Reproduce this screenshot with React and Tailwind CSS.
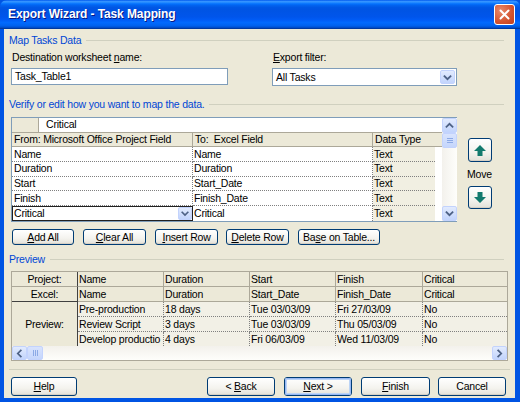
import React from "react";

const U = ({ children }) => <span className="underline underline-offset-[1px]">{children}</span>;

function Btn({ children, className = "", focus = false }) {
  return (
    <div
      className={`flex items-center justify-center rounded-[3px] border border-[#003C74] bg-[linear-gradient(to_bottom,#FFFFFF_0%,#F4F3EE_60%,#E3E1D8_100%)] text-black shadow-[inset_0_-1px_0_#D6D0C5] ${className}`}
    >
      {focus ? (
        <div className="flex h-full w-full items-center justify-center rounded-[2px] shadow-[inset_0_0_0_1px_#98B8F3,inset_0_0_0_2px_#BCD4F6]">{children}</div>
      ) : (
        children
      )}
    </div>
  );
}

function Chevron({ dir = "down", size = 15 }) {
  const paths = {
    down: "M4 6 L7.5 9.5 L11 6",
    up: "M4 9 L7.5 5.5 L11 9",
    left: "M9 4 L5.5 7.5 L9 11",
    right: "M6 4 L9.5 7.5 L6 11",
  };
  return (
    <svg width={size} height={size} viewBox="0 0 15 15">
      <path d={paths[dir]} fill="none" stroke="#4D6185" strokeWidth="2" strokeLinecap="square" />
    </svg>
  );
}

function ScrollBtn({ dir, className = "" }) {
  return (
    <div
      className={`flex items-center justify-center rounded-[2px] border border-[#C3D3FD] bg-[linear-gradient(to_bottom,#E2EBFE,#C2D4FC)] ${className}`}
    >
      <Chevron dir={dir} size={13} />
    </div>
  );
}

function Thumb({ horizontal = false, className = "" }) {
  return (
    <div
      className={`flex items-center justify-center gap-[1px] rounded-[2px] border border-[#C3D3FD] bg-[linear-gradient(to_bottom,#D8E3FD,#C5D6FC)] ${horizontal ? "" : "flex-col"} ${className}`}
    >
      {[0, 1, 2].map((i) => (
        <div key={i} className={horizontal ? "h-[6px] w-[1px] bg-[#8CAAE6]" : "h-[1px] w-[6px] bg-[#8CAAE6]"} />
      ))}
    </div>
  );
}

function MoveArrow({ up }) {
  return (
    <svg width="12" height="11" viewBox="0 0 12 11">
      {up ? (
        <polygon points="6,0 12,6 8.5,6 8.5,11 3.5,11 3.5,6 0,6" fill="#137A6E" />
      ) : (
        <polygon points="6,11 12,5 8.5,5 8.5,0 3.5,0 3.5,5 0,5" fill="#137A6E" />
      )}
    </svg>
  );
}

function GroupLabel({ children }) {
  return (
    <div className="flex h-[13px] items-center pl-[5px] pr-[11px]">
      <span className="text-[#0046D5]">{children}</span>
      <div className="ml-[5px] h-[1px] flex-1 bg-[#D0D0BF]" />
    </div>
  );
}

export default function App() {
  const rows = [
    ["Name", "Name", "Text"],
    ["Duration", "Duration", "Text"],
    ["Start", "Start_Date", "Text"],
    ["Finish", "Finish_Date", "Text"],
  ];
  const preview = [
    ["Pre-production", "18 days", "Tue 03/03/09", "Fri 27/03/09", "No"],
    ["Review Script", "3 days", "Tue 03/03/09", "Thu 05/03/09", "No"],
    ["Develop productio", "4 days", "Fri 06/03/09", "Wed 11/03/09", "No"],
  ];
  const heads = ["Name", "Duration", "Start", "Finish", "Critical"];
  const excel = ["Name", "Duration", "Start_Date", "Finish_Date", "Critical"];

  return (
    <div className="h-[402px] w-[520px] overflow-hidden bg-[#0054E3] font-['Liberation_Sans',Arial,sans-serif] text-[10.5px] leading-[13px] tracking-[-0.2px] text-black">
      {/* Title bar */}
      <div className="flex h-[29px] items-center justify-between rounded-t-[7px] bg-[linear-gradient(to_bottom,#0058EE_0%,#3593FF_5%,#288EFF_8%,#127DFF_11%,#036FFC_14%,#0262EE_19%,#0057E5_26%,#0054E3_32%,#0055EB_58%,#005BF5_68%,#026AFE_78%,#0062EF_88%,#0052D6_94%,#0040AB_97%,#003092_100%)] pl-[8px] pr-[5px]">
        <span className="text-[12px] font-bold tracking-[-0.1px] text-white [text-shadow:1px_1px_0_#0A1883]">Export Wizard - Task Mapping</span>
        <div className="flex h-[21px] w-[21px] items-center justify-center rounded-[3px] border border-white bg-[radial-gradient(circle_at_30%_30%,#E7896B,#D4532F_60%,#C1401F)]">
          <svg width="11" height="11" viewBox="0 0 11 11">
            <path d="M1.5 1.5 L9.5 9.5 M9.5 1.5 L1.5 9.5" stroke="white" strokeWidth="2" strokeLinecap="round" />
          </svg>
        </div>
      </div>

      {/* Body */}
      <div className="ml-[4px] mr-[5px] flex h-[369px] flex-col bg-[#ECE9D8]">
        <div className="mt-[5px]">
          <GroupLabel>Map Tasks Data</GroupLabel>
        </div>

        {/* Destination / filter */}
        <div className="mt-[4px] flex">
          <div className="ml-[7px] flex w-[217px] flex-col">
            <div className="h-[13px] pl-[1px]">
              Destination worksheet <U>n</U>ame:
            </div>
            <div className="mt-[4px] flex h-[17px] items-center border border-[#7F9DB9] bg-white pl-[3px]">Task_Table1</div>
          </div>
          <div className="ml-[44px] flex w-[185px] flex-col">
            <div className="h-[13px] pl-[1px]">
              <U>E</U>xport filter:
            </div>
            <div className="mt-[4px] flex h-[18px] items-center justify-between border border-[#7F9DB9] bg-white pl-[3px] pr-[1px]">
              <span>All Tasks</span>
              <ScrollBtn dir="down" className="h-[14px] w-[15px]" />
            </div>
          </div>
        </div>

        <div className="mt-[12px]">
          <GroupLabel>Verify or edit how you want to map the data.</GroupLabel>
        </div>

        {/* Mapping table + move */}
        <div className="mt-[6px] flex">
          <div className="ml-[7px] flex h-[105px] w-[446px] border border-[#7F9DB9] bg-white">
            <div className="flex w-[430px] flex-col">
              <div className="flex h-[15px] border-b border-[#ACA899]">
                <div className="w-[27px] border-r border-[#ACA899] bg-[#ECE9D8]" />
                <div className="flex items-center pl-[7px]">Critical</div>
              </div>
              <div className="flex h-[15px] bg-[#ECE9D8]">
                <div className="flex w-[181px] items-center border-b border-r border-[#ACA899] pl-[2px]">From: Microsoft Office Project Field</div>
                <div className="flex w-[180px] items-center border-b border-r border-[#ACA899] pl-[2px]">To:&nbsp; Excel Field</div>
                <div className="flex w-[69px] items-center border-b border-[#ACA899] pl-[2px]">Data Type</div>
              </div>
              {rows.map((r) => (
                <div key={r[0]} className="flex h-[15px]">
                  <div className="flex w-[181px] items-center border-b border-r border-dotted border-[#808080] pl-[2px]">{r[0]}</div>
                  <div className="flex w-[180px] items-center border-b border-r border-dotted border-[#808080] pl-[1px]">{r[1]}</div>
                  <div className="flex w-[62px] items-center border-b border-dotted border-[#808080] bg-[#F1EFE2] pl-[1px]">{r[2]}</div>
                </div>
              ))}
              <div className="flex h-[15px]">
                <div className="flex w-[181px] items-center justify-between border border-[#202020] bg-white pl-[1px]">
                  <span>Critical</span>
                  <ScrollBtn dir="down" className="h-[13px] w-[14px]" />
                </div>
                <div className="flex w-[180px] items-center border-r border-dotted border-[#808080] pl-[1px]">Critical</div>
                <div className="flex w-[62px] items-center bg-[#F1EFE2] pl-[1px]">Text</div>
              </div>
            </div>
            <div className="flex w-[15px] flex-col bg-[linear-gradient(to_right,#F3F1EC,#FEFEFB)]">
              <ScrollBtn dir="up" className="h-[15px] w-[15px]" />
              <Thumb className="h-[15px] w-[15px]" />
              <div className="flex-1" />
              <ScrollBtn dir="down" className="h-[15px] w-[15px]" />
            </div>
          </div>
          <div className="ml-[10px] mt-[21px] flex w-[25px] flex-col items-center">
            <Btn className="h-[24px] w-[24px]">
              <MoveArrow up />
            </Btn>
            <div className="mt-[6px] h-[13px]">Move</div>
            <Btn className="mt-[5px] h-[23px] w-[24px]">
              <MoveArrow />
            </Btn>
          </div>
        </div>

        {/* Action buttons */}
        <div className="ml-[8px] mt-[7px] flex h-[16px]">
          <Btn className="w-[62px]">
            <span><U>A</U>dd All</span>
          </Btn>
          <Btn className="ml-[9px] w-[63px]">
            <span><U>C</U>lear All</span>
          </Btn>
          <Btn className="ml-[9px] w-[63px]">
            <span><U>I</U>nsert Row</span>
          </Btn>
          <Btn className="ml-[8px] w-[63px]">
            <span><U>D</U>elete Row</span>
          </Btn>
          <Btn className="ml-[9px] w-[82px]">
            <span>Ba<U>s</U>e on Table...</span>
          </Btn>
        </div>

        <div className="mt-[8px]">
          <GroupLabel>Preview</GroupLabel>
        </div>

        {/* Preview table */}
        <div className="ml-[7px] mt-[5px] w-[497px] border border-[#ACA899]">
          <div className="grid grid-cols-[66px_86px_86px_86px_87px_84px] grid-rows-[15px_15px_15px_15px_14px] bg-[#F2F0E6]">
            <div className="flex items-center justify-center border-b border-r border-b-[#ACA899] border-r-[#404040] bg-[#ECE9D8]">Project:</div>
            {heads.map((h, i) => (
              <div key={h} className={`flex items-center border-b border-[#ACA899] bg-[#ECE9D8] pl-[1px] ${i < 4 ? "border-r" : ""}`}>{h}</div>
            ))}
            <div className="flex items-center justify-center border-b border-r border-[#404040] bg-[#ECE9D8]">Excel:</div>
            {excel.map((h, i) => (
              <div key={h} className={`flex items-center border-b border-[#ACA899] bg-[#ECE9D8] pl-[1px] ${i < 4 ? "border-r" : ""}`}>{h}</div>
            ))}
            <div className="row-span-3 flex items-center justify-center border-r border-[#404040] bg-[#ECE9D8]">Preview:</div>
            {preview.map((r, ri) =>
              r.map((c, ci) => (
                <div
                  key={ri + "-" + ci}
                  className={`flex items-center overflow-hidden whitespace-nowrap border-dotted border-[#808080] pl-[1px] ${ci < 4 ? "border-r" : ""} ${ri < 2 ? "border-b" : ""}`}
                >
                  {c}
                </div>
              ))
            )}
          </div>
          <div className="flex h-[14px] bg-[linear-gradient(to_bottom,#F3F1EC,#FEFEFB)]">
            <ScrollBtn dir="left" className="h-[14px] w-[15px]" />
            <Thumb horizontal className="h-[14px] w-[16px]" />
            <div className="flex-1" />
            <ScrollBtn dir="right" className="h-[14px] w-[15px]" />
          </div>
        </div>

        <div className="mx-[5px] mt-[8px] h-[1px] bg-[#D0D0BF]" />

        {/* Bottom buttons */}
        <div className="mt-[7px] flex h-[19px]">
          <Btn className="ml-[7px] w-[66px]">
            <span><U>H</U>elp</span>
          </Btn>
          <Btn className="ml-[130px] w-[68px]">
            <span>&lt; <U>B</U>ack</span>
          </Btn>
          <Btn focus className="ml-[9px] w-[68px]">
            <span><U>N</U>ext &gt;</span>
          </Btn>
          <Btn className="ml-[9px] w-[69px]">
            <span><U>F</U>inish</span>
          </Btn>
          <Btn className="ml-[8px] w-[68px]">
            <span>Cancel</span>
          </Btn>
        </div>
      </div>
    </div>
  );
}
